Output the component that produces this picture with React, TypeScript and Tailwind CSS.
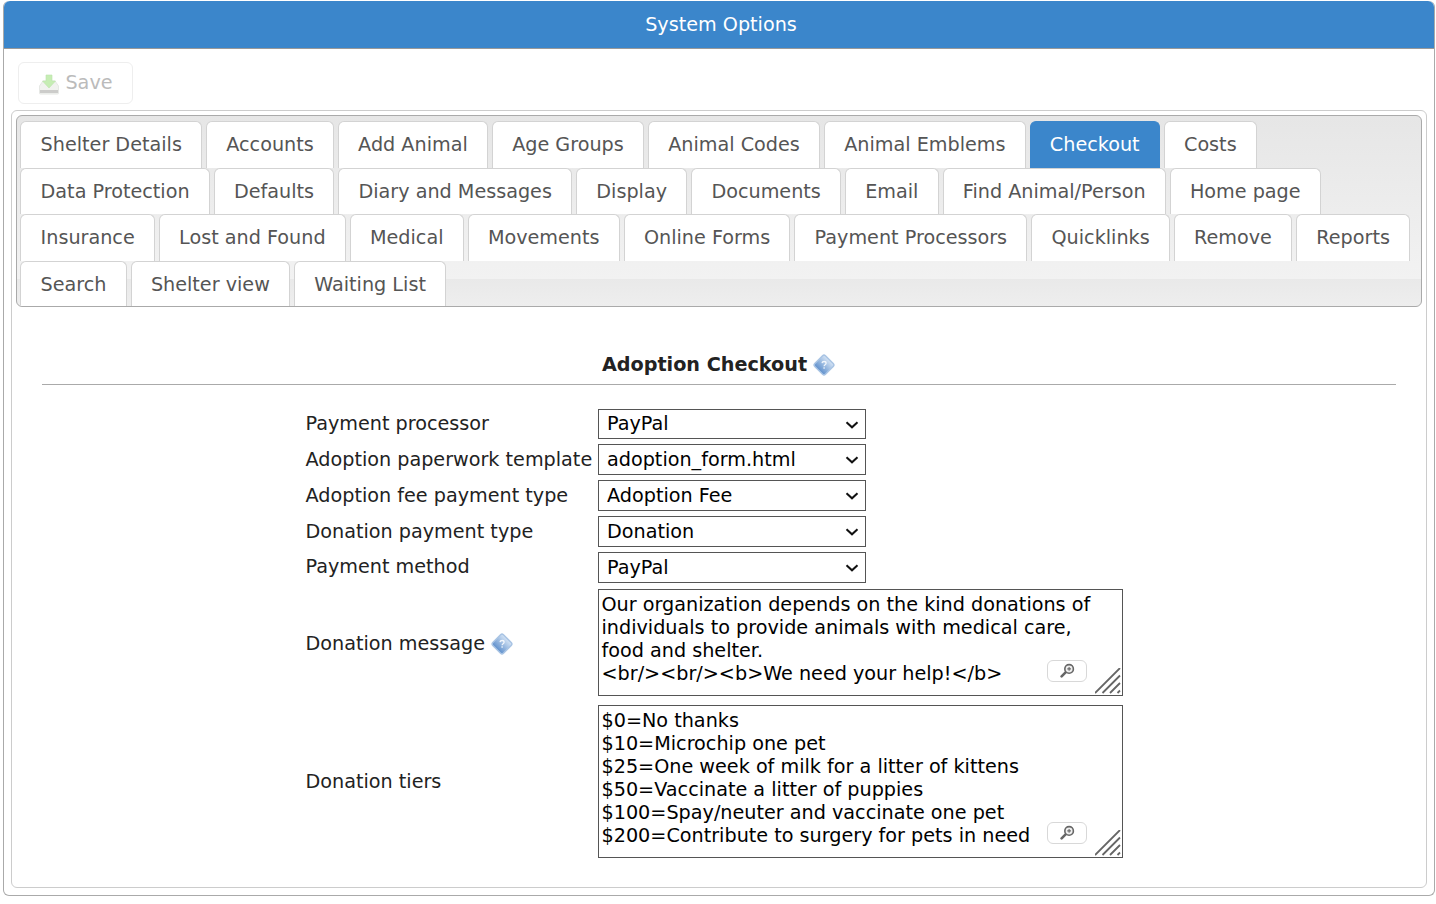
import type { ReactNode } from 'react';

const row1 = ['Shelter Details', 'Accounts', 'Add Animal', 'Age Groups', 'Animal Codes', 'Animal Emblems', 'Checkout', 'Costs'];
const row2 = ['Data Protection', 'Defaults', 'Diary and Messages', 'Display', 'Documents', 'Email', 'Find Animal/Person', 'Home page'];
const row3 = ['Insurance', 'Lost and Found', 'Medical', 'Movements', 'Online Forms', 'Payment Processors', 'Quicklinks', 'Remove', 'Reports'];
const row4 = ['Search', 'Shelter view', 'Waiting List'];
const tabs = [...row1, ...row2, ...row3, ...row4];

const selects = [
  { label: 'Payment processor', value: 'PayPal' },
  { label: 'Adoption paperwork template', value: 'adoption_form.html' },
  { label: 'Adoption fee payment type', value: 'Adoption Fee' },
  { label: 'Donation payment type', value: 'Donation' },
  { label: 'Payment method', value: 'PayPal' },
];

const donationMessage = `Our organization depends on the kind donations of individuals to provide animals with medical care, food and shelter.
<br/><br/><b>We need your help!</b>`;

const donationTiers = `$0=No thanks
$10=Microchip one pet
$25=One week of milk for a litter of kittens
$50=Vaccinate a litter of puppies
$100=Spay/neuter and vaccinate one pet
$200=Contribute to surgery for pets in need`;

function HelpIcon() {
  return (
    <svg width="22" height="22" viewBox="0 0 22 22" className="shrink-0">
      <defs>
        <linearGradient id="helpFill" x1="0" y1="0" x2="0" y2="1">
          <stop offset="0" stopColor="#d5e4f5" />
          <stop offset="1" stopColor="#5f90cc" />
        </linearGradient>
      </defs>
      <rect x="3.500" y="3.500" width="15" height="15" rx="2" transform="rotate(45 11 11)" fill="url(#helpFill)" stroke="#a9c4e4" strokeWidth="1.500" />
      <path d="M9 9.200c.2-1.200 1.100-1.700 2.100-1.700 1.200 0 2 .7 2 1.700 0 1.500-2 1.500-2 3" fill="none" stroke="#fff" strokeWidth="1.300" opacity=".85" />
      <rect x="10.400" y="13.300" width="1.400" height="1.400" fill="#fff" opacity=".85" />
    </svg>
  );
}

function SaveIcon() {
  return (
    <svg width="22" height="22" viewBox="0 0 22 22" className="opacity-50">
      <path d="M1.500 13 5 8h12l3.500 5v7a1 1 0 0 1-1 1h-17a1 1 0 0 1-1-1z" fill="#e4e6e0" stroke="#cfd2cc" />
      <rect x="2" y="17" width="18" height="3" fill="#9a9a96" />
      <path d="M8 2h6v6h3.500L11 15 4.500 8H8z" fill="#8fdc6c" stroke="#79c95a" strokeWidth=".6" />
    </svg>
  );
}

function ZoomButton() {
  return (
    <div className="absolute right-[36px] bottom-[14px] flex h-[22px] w-[40px] items-center justify-center rounded-[6px] border border-[#d8d8d8] bg-white">
      <svg width="15" height="15" viewBox="0 0 14 14">
        <path d="M1.500 12.500 5 9" stroke="#666" strokeWidth="2.400" strokeLinecap="round" />
        <circle cx="8.500" cy="5.500" r="4" fill="#eee" stroke="#666" strokeWidth="1.500" />
        <path d="M6.800 5.500h3.400M8.500 3.800v3.400" stroke="#666" strokeWidth="1" />
      </svg>
    </div>
  );
}

function ResizeHandle() {
  return (
    <svg width="26" height="26" viewBox="0 0 26 26" className="absolute right-[2px] bottom-[2px]">
      <path d="M0 25 25 0M7.500 25 25 7.500M15 25l10-10M22.500 25l2.500-2.500" stroke="#666" strokeWidth="1.800" fill="none" />
    </svg>
  );
}

function Field({ label, children, labelClass = 'pt-[1.2px]' }: { label: ReactNode; children: ReactNode; labelClass?: string }) {
  return (
    <>
      <div className={`flex items-center gap-[6px] whitespace-nowrap ${labelClass}`}>{label}</div>
      {children}
    </>
  );
}

function NoteArea({ value, height }: { value: string; height: string }) {
  return (
    <div className={`relative w-[525px] ${height}`}>
      <textarea
        readOnly
        value={value}
        className="h-full w-full resize-none overflow-hidden border border-[#555] bg-white py-[3px] pr-[20px] pl-[2.5px] text-[19.2px] leading-[23px] text-black outline-none"
      />
      <ZoomButton />
      <ResizeHandle />
    </div>
  );
}

function SelectBox({ value }: { value: string }) {
  return (
    <div className="relative h-[30.8px] w-[268px]">
      <select
        defaultValue={value}
        className="h-full w-full appearance-none border border-[#555] bg-white pt-[0.8px] pl-[8px] text-[19.2px] text-black"
      >
        <option>{value}</option>
      </select>
      <svg width="14" height="8" viewBox="0 0 14 8" className="pointer-events-none absolute top-[12px] right-[7px]">
        <path d="M1.500 1.200 7 6.300l5.500-5.100" fill="none" stroke="#111" strokeWidth="2" />
      </svg>
    </div>
  );
}

export default function App() {
  return (
    <div className="h-[904px] bg-white pt-px pl-[3px] pr-px font-['DejaVu_Sans',sans-serif] text-[19.2px] text-[#222]">
      <div className="h-[895px] rounded-[6px] border border-[#aaa] border-t-0">
        <div className="flex h-[48px] items-center justify-center rounded-t-[6px] border-b border-[#999] bg-[#3b86cb] pt-px pl-[4px] text-white">
          System Options
        </div>

        <div className="px-[7px]">
          <div className="pt-[13px] pb-[6px] pl-[7px]">
            <button className="flex h-[42px] w-[115px] items-center justify-center gap-[5px] rounded-[6px] border border-[#eee] bg-white pt-px text-[#bbb]">
              <SaveIcon />
              Save
            </button>
          </div>

          <div className="h-[778px] rounded-[6px] border border-[#ccc] p-[4px]">
            <div className="h-[192px] overflow-hidden rounded-[6px] border border-[#aaa] bg-[linear-gradient(#e6e6e6_0,#f2f2f2_163px,#e9e9e9_163px,#eeeeee_100%)] pt-[5px] pl-[3.4px]">
              <div className="flex flex-wrap gap-x-[4px]">
                {tabs.map((tab) => (
                  <div
                    key={tab}
                    className={
                      tab === 'Checkout'
                        ? 'flex h-[46.5px] items-center rounded-t-[6px] border border-b-0 border-[#3b86cb] bg-[#3b86cb] px-[19.2px] pt-[2px] text-white'
                        : 'flex h-[46.5px] items-center rounded-t-[6px] border border-b-0 border-[#d3d3d3] bg-white px-[19.2px] pt-[2px] text-[#555]'
                    }
                  >
                    {tab}
                  </div>
                ))}
              </div>
            </div>

            <div className="mt-[45px] flex items-center justify-center gap-[6px] pt-px pr-px font-bold leading-[24px]">
              Adoption Checkout
              <span className="font-normal">
                <HelpIcon />
              </span>
            </div>
            <div className="mx-[26px] mt-[7px] border-t border-[#aaa]" />

            <div className="mt-[23.6px] ml-[289.5px] grid grid-cols-[292.5px_auto] items-center justify-start gap-y-[5px]">
              {selects.map((item) => (
                <Field key={item.label} label={item.label}>
                  <SelectBox value={item.value} />
                </Field>
              ))}
              <Field
                labelClass="pt-[5px]"
                label={
                  <>
                    Donation message
                    <HelpIcon />
                  </>
                }
              >
                <div className="mt-[1.4px]">
                  <NoteArea value={donationMessage} height="h-[107px]" />
                </div>
              </Field>
              <Field label="Donation tiers" labelClass="pt-[6px]">
                <div className="mt-[4px]">
                  <NoteArea value={donationTiers} height="h-[153px]" />
                </div>
              </Field>
            </div>
          </div>
        </div>
      </div>
    </div>
  );
}
